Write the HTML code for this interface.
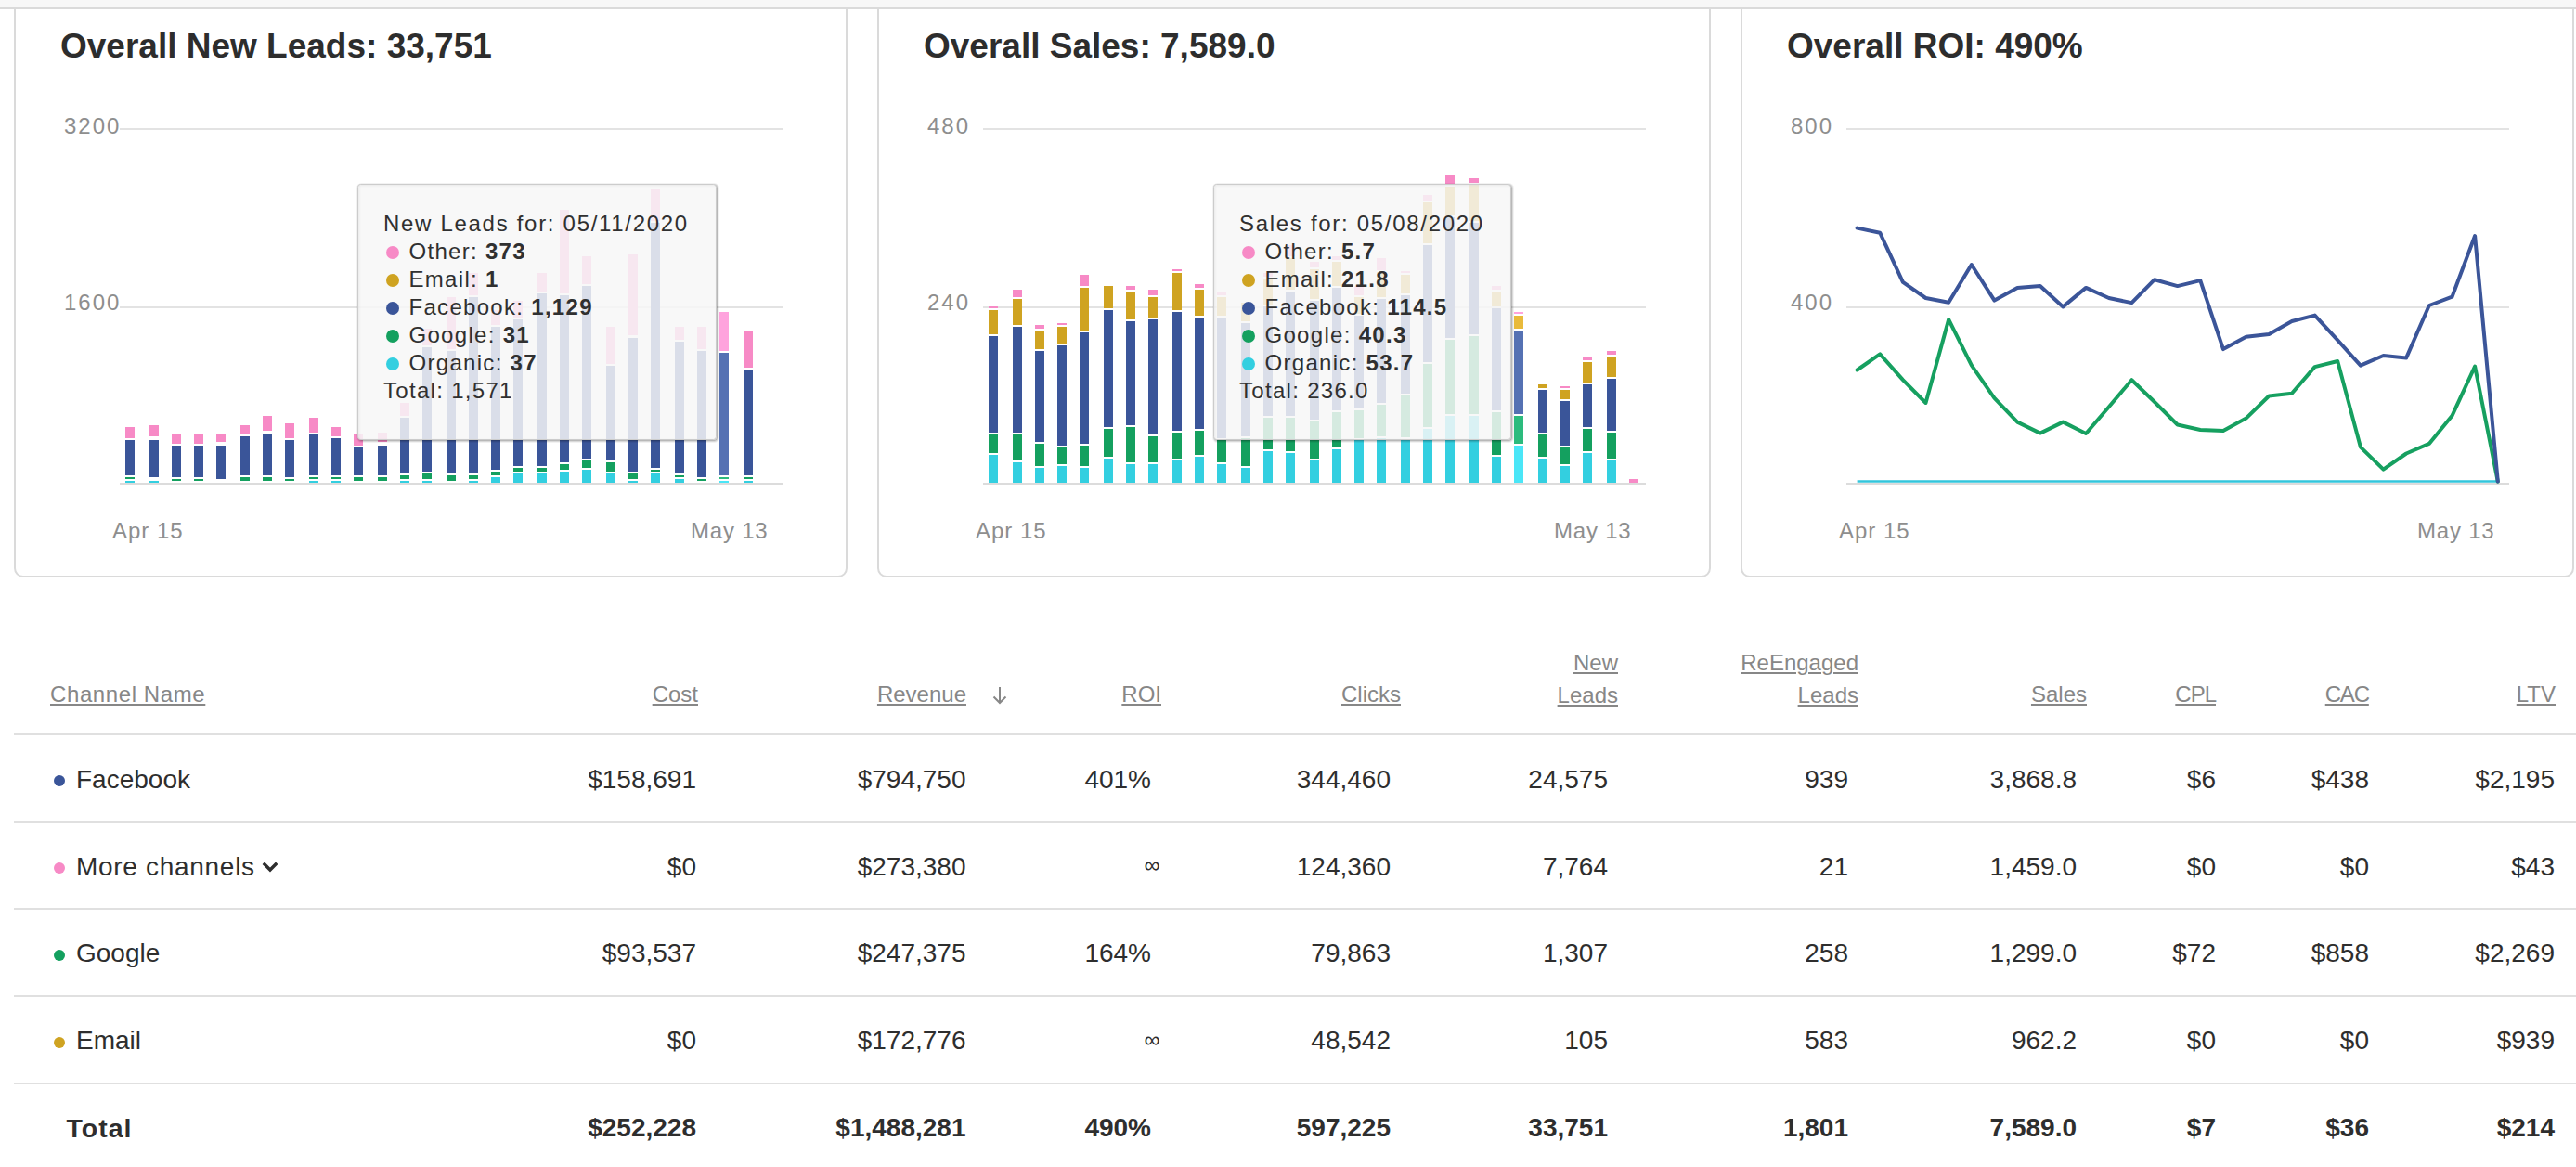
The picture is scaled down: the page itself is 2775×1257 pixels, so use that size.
<!DOCTYPE html>
<html><head><meta charset="utf-8"><style>
html,body{margin:0;padding:0;}
body{width:2775px;height:1257px;overflow:hidden;background:#fff;position:relative;font-family:"Liberation Sans", sans-serif;}
.t{position:absolute;white-space:nowrap;}
.card{position:absolute;top:-20px;width:894px;height:638px;border:2px solid #dadada;border-radius:10px;background:#fff;}
.tip{position:absolute;background:rgba(247,247,247,0.85);border:1px solid #c9c9c9;border-radius:4px;box-shadow:2px 2px 3px rgba(0,0,0,0.28);}
.dot{position:absolute;border-radius:50%;}
svg{position:absolute;left:0;top:0;}
.h{text-decoration:underline;text-decoration-thickness:2px;text-underline-offset:2px;}
</style></head><body>

<div class="card" style="left:15px"></div>
<div class="card" style="left:945px"></div>
<div class="card" style="left:1875px"></div>
<div style="position:absolute;left:0;top:0;width:2775px;height:8px;background:#f7f7f7;border-bottom:2px solid #dadada"></div>
<div class="t" style="left:65.0px;top:31.1px;font-size:37px;line-height:37px;color:#2d2d2d;font-weight:bold;letter-spacing:0px;">Overall New Leads: 33,751</div>
<div class="t" style="left:995.0px;top:31.1px;font-size:37px;line-height:37px;color:#2d2d2d;font-weight:bold;letter-spacing:0px;">Overall Sales: 7,589.0</div>
<div class="t" style="left:1925.0px;top:31.1px;font-size:37px;line-height:37px;color:#2d2d2d;font-weight:bold;letter-spacing:0px;">Overall ROI: 490%</div>
<svg width="2775" height="1257" viewBox="0 0 2775 1257" shape-rendering="crispEdges">
<rect x="129" y="138" width="714" height="2" fill="#e3e3e3"/>
<rect x="129" y="330" width="714" height="2" fill="#e3e3e3"/>
<rect x="129" y="520" width="714" height="2" fill="#dcdcdc"/>
<rect x="1059" y="138" width="714" height="2" fill="#e3e3e3"/>
<rect x="1059" y="330" width="714" height="2" fill="#e3e3e3"/>
<rect x="1059" y="520" width="714" height="2" fill="#dcdcdc"/>
<rect x="1989" y="138" width="714" height="2" fill="#e3e3e3"/>
<rect x="1989" y="330" width="714" height="2" fill="#e3e3e3"/>
<rect x="1989" y="520" width="714" height="2" fill="#dcdcdc"/>
<rect x="135" y="460" width="10" height="12" fill="#f78ac6"/>
<rect x="135" y="474" width="10" height="38" fill="#3a5599"/>
<rect x="135" y="514" width="10" height="2" fill="#14a05f"/>
<rect x="135" y="518" width="10" height="2" fill="#33cfe0"/>
<rect x="161" y="458" width="10" height="12" fill="#f78ac6"/>
<rect x="161" y="474" width="10" height="40" fill="#3a5599"/>
<rect x="161" y="518" width="10" height="2" fill="#33cfe0"/>
<rect x="185" y="468" width="10" height="10" fill="#f78ac6"/>
<rect x="185" y="480" width="10" height="34" fill="#3a5599"/>
<rect x="185" y="516" width="10" height="2" fill="#14a05f"/>
<rect x="209" y="468" width="10" height="10" fill="#f78ac6"/>
<rect x="209" y="480" width="10" height="34" fill="#3a5599"/>
<rect x="209" y="516" width="10" height="2" fill="#14a05f"/>
<rect x="233" y="468" width="10" height="8" fill="#f78ac6"/>
<rect x="233" y="480" width="10" height="36" fill="#3a5599"/>
<rect x="259" y="458" width="10" height="10" fill="#f78ac6"/>
<rect x="259" y="470" width="10" height="42" fill="#3a5599"/>
<rect x="259" y="514" width="10" height="4" fill="#14a05f"/>
<rect x="283" y="448" width="10" height="16" fill="#f78ac6"/>
<rect x="283" y="468" width="10" height="44" fill="#3a5599"/>
<rect x="283" y="514" width="10" height="4" fill="#14a05f"/>
<rect x="307" y="456" width="10" height="16" fill="#f78ac6"/>
<rect x="307" y="474" width="10" height="40" fill="#3a5599"/>
<rect x="307" y="516" width="10" height="2" fill="#14a05f"/>
<rect x="333" y="450" width="10" height="16" fill="#f78ac6"/>
<rect x="333" y="468" width="10" height="44" fill="#3a5599"/>
<rect x="333" y="514" width="10" height="2" fill="#14a05f"/>
<rect x="333" y="518" width="10" height="2" fill="#33cfe0"/>
<rect x="357" y="460" width="10" height="10" fill="#f78ac6"/>
<rect x="357" y="472" width="10" height="40" fill="#3a5599"/>
<rect x="357" y="514" width="10" height="2" fill="#14a05f"/>
<rect x="357" y="518" width="10" height="2" fill="#33cfe0"/>
<rect x="381" y="468" width="10" height="12" fill="#f78ac6"/>
<rect x="381" y="482" width="10" height="30" fill="#3a5599"/>
<rect x="381" y="514" width="10" height="4" fill="#14a05f"/>
<rect x="407" y="466" width="10" height="10" fill="#f78ac6"/>
<rect x="407" y="480" width="10" height="32" fill="#3a5599"/>
<rect x="407" y="514" width="10" height="4" fill="#14a05f"/>
<rect x="431" y="434" width="10" height="14" fill="#f78ac6"/>
<rect x="431" y="450" width="10" height="60" fill="#3a5599"/>
<rect x="431" y="512" width="10" height="4" fill="#14a05f"/>
<rect x="431" y="518" width="10" height="2" fill="#33cfe0"/>
<rect x="455" y="354" width="10" height="18" fill="#f78ac6"/>
<rect x="455" y="374" width="10" height="134" fill="#3a5599"/>
<rect x="455" y="510" width="10" height="6" fill="#14a05f"/>
<rect x="455" y="518" width="10" height="2" fill="#33cfe0"/>
<rect x="481" y="320" width="10" height="56" fill="#f78ac6"/>
<rect x="481" y="378" width="10" height="132" fill="#3a5599"/>
<rect x="481" y="512" width="10" height="6" fill="#14a05f"/>
<rect x="505" y="294" width="10" height="24" fill="#f78ac6"/>
<rect x="505" y="320" width="10" height="190" fill="#3a5599"/>
<rect x="505" y="512" width="10" height="4" fill="#14a05f"/>
<rect x="505" y="518" width="10" height="2" fill="#33cfe0"/>
<rect x="529" y="334" width="10" height="16" fill="#f78ac6"/>
<rect x="529" y="352" width="10" height="154" fill="#3a5599"/>
<rect x="529" y="508" width="10" height="4" fill="#14a05f"/>
<rect x="529" y="514" width="10" height="6" fill="#33cfe0"/>
<rect x="553" y="324" width="10" height="18" fill="#f78ac6"/>
<rect x="553" y="344" width="10" height="158" fill="#3a5599"/>
<rect x="553" y="504" width="10" height="4" fill="#14a05f"/>
<rect x="553" y="510" width="10" height="10" fill="#33cfe0"/>
<rect x="579" y="294" width="10" height="20" fill="#f78ac6"/>
<rect x="579" y="316" width="10" height="186" fill="#3a5599"/>
<rect x="579" y="504" width="10" height="4" fill="#14a05f"/>
<rect x="579" y="510" width="10" height="10" fill="#33cfe0"/>
<rect x="603" y="226" width="10" height="90" fill="#f78ac6"/>
<rect x="603" y="318" width="10" height="180" fill="#3a5599"/>
<rect x="603" y="500" width="10" height="6" fill="#14a05f"/>
<rect x="603" y="508" width="10" height="12" fill="#33cfe0"/>
<rect x="627" y="276" width="10" height="30" fill="#f78ac6"/>
<rect x="627" y="308" width="10" height="186" fill="#3a5599"/>
<rect x="627" y="496" width="10" height="8" fill="#14a05f"/>
<rect x="627" y="506" width="10" height="14" fill="#33cfe0"/>
<rect x="653" y="352" width="10" height="40" fill="#f78ac6"/>
<rect x="653" y="394" width="10" height="102" fill="#3a5599"/>
<rect x="653" y="498" width="10" height="10" fill="#14a05f"/>
<rect x="653" y="510" width="10" height="10" fill="#33cfe0"/>
<rect x="677" y="274" width="10" height="87" fill="#f78ac6"/>
<rect x="677" y="364" width="10" height="144" fill="#3a5599"/>
<rect x="677" y="510" width="10" height="6" fill="#14a05f"/>
<rect x="677" y="518" width="10" height="2" fill="#33cfe0"/>
<rect x="701" y="204" width="10" height="34" fill="#f78ac6"/>
<rect x="701" y="240" width="10" height="264" fill="#3a5599"/>
<rect x="701" y="506" width="10" height="2" fill="#14a05f"/>
<rect x="701" y="510" width="10" height="10" fill="#33cfe0"/>
<rect x="727" y="352" width="10" height="14" fill="#f78ac6"/>
<rect x="727" y="368" width="10" height="142" fill="#3a5599"/>
<rect x="727" y="512" width="10" height="2" fill="#14a05f"/>
<rect x="727" y="516" width="10" height="4" fill="#33cfe0"/>
<rect x="751" y="352" width="10" height="24" fill="#f78ac6"/>
<rect x="751" y="378" width="10" height="136" fill="#3a5599"/>
<rect x="751" y="516" width="10" height="2" fill="#14a05f"/>
<rect x="775" y="336" width="10" height="42" fill="#ffa3dd"/>
<rect x="775" y="380" width="10" height="132" fill="#5571b3"/>
<rect x="775" y="514" width="10" height="2" fill="#2cbb7d"/>
<rect x="775" y="518" width="10" height="2" fill="#4ae6f7"/>
<rect x="801" y="356" width="10" height="40" fill="#f78ac6"/>
<rect x="801" y="398" width="10" height="114" fill="#3a5599"/>
<rect x="801" y="514" width="10" height="2" fill="#14a05f"/>
<rect x="801" y="518" width="10" height="2" fill="#33cfe0"/>
<rect x="1065" y="330" width="10" height="2" fill="#f78ac6"/>
<rect x="1065" y="334" width="10" height="26" fill="#cfa321"/>
<rect x="1065" y="362" width="10" height="104" fill="#3a5599"/>
<rect x="1065" y="468" width="10" height="20" fill="#14a05f"/>
<rect x="1065" y="490" width="10" height="30" fill="#33cfe0"/>
<rect x="1091" y="312" width="10" height="8" fill="#f78ac6"/>
<rect x="1091" y="322" width="10" height="28" fill="#cfa321"/>
<rect x="1091" y="352" width="10" height="114" fill="#3a5599"/>
<rect x="1091" y="468" width="10" height="28" fill="#14a05f"/>
<rect x="1091" y="498" width="10" height="22" fill="#33cfe0"/>
<rect x="1115" y="350" width="10" height="4" fill="#f78ac6"/>
<rect x="1115" y="356" width="10" height="20" fill="#cfa321"/>
<rect x="1115" y="378" width="10" height="98" fill="#3a5599"/>
<rect x="1115" y="478" width="10" height="24" fill="#14a05f"/>
<rect x="1115" y="504" width="10" height="16" fill="#33cfe0"/>
<rect x="1139" y="348" width="10" height="2" fill="#f78ac6"/>
<rect x="1139" y="352" width="10" height="18" fill="#cfa321"/>
<rect x="1139" y="372" width="10" height="108" fill="#3a5599"/>
<rect x="1139" y="482" width="10" height="18" fill="#14a05f"/>
<rect x="1139" y="502" width="10" height="18" fill="#33cfe0"/>
<rect x="1163" y="296" width="10" height="12" fill="#f78ac6"/>
<rect x="1163" y="310" width="10" height="46" fill="#cfa321"/>
<rect x="1163" y="358" width="10" height="120" fill="#3a5599"/>
<rect x="1163" y="480" width="10" height="22" fill="#14a05f"/>
<rect x="1163" y="504" width="10" height="16" fill="#33cfe0"/>
<rect x="1189" y="308" width="10" height="24" fill="#cfa321"/>
<rect x="1189" y="334" width="10" height="126" fill="#3a5599"/>
<rect x="1189" y="462" width="10" height="30" fill="#14a05f"/>
<rect x="1189" y="494" width="10" height="26" fill="#33cfe0"/>
<rect x="1213" y="308" width="10" height="4" fill="#f78ac6"/>
<rect x="1213" y="314" width="10" height="30" fill="#cfa321"/>
<rect x="1213" y="346" width="10" height="112" fill="#3a5599"/>
<rect x="1213" y="460" width="10" height="38" fill="#14a05f"/>
<rect x="1213" y="500" width="10" height="20" fill="#33cfe0"/>
<rect x="1237" y="312" width="10" height="6" fill="#f78ac6"/>
<rect x="1237" y="320" width="10" height="22" fill="#cfa321"/>
<rect x="1237" y="344" width="10" height="124" fill="#3a5599"/>
<rect x="1237" y="470" width="10" height="28" fill="#14a05f"/>
<rect x="1237" y="500" width="10" height="20" fill="#33cfe0"/>
<rect x="1263" y="290" width="10" height="2" fill="#f78ac6"/>
<rect x="1263" y="294" width="10" height="40" fill="#cfa321"/>
<rect x="1263" y="336" width="10" height="128" fill="#3a5599"/>
<rect x="1263" y="466" width="10" height="28" fill="#14a05f"/>
<rect x="1263" y="496" width="10" height="24" fill="#33cfe0"/>
<rect x="1287" y="306" width="10" height="4" fill="#f78ac6"/>
<rect x="1287" y="312" width="10" height="28" fill="#cfa321"/>
<rect x="1287" y="342" width="10" height="120" fill="#3a5599"/>
<rect x="1287" y="464" width="10" height="26" fill="#14a05f"/>
<rect x="1287" y="492" width="10" height="28" fill="#33cfe0"/>
<rect x="1311" y="314" width="10" height="4" fill="#f78ac6"/>
<rect x="1311" y="320" width="10" height="20" fill="#cfa321"/>
<rect x="1311" y="342" width="10" height="130" fill="#3a5599"/>
<rect x="1311" y="474" width="10" height="24" fill="#14a05f"/>
<rect x="1311" y="500" width="10" height="20" fill="#33cfe0"/>
<rect x="1337" y="326" width="10" height="20" fill="#cfa321"/>
<rect x="1337" y="348" width="10" height="122" fill="#3a5599"/>
<rect x="1337" y="472" width="10" height="30" fill="#14a05f"/>
<rect x="1337" y="504" width="10" height="16" fill="#33cfe0"/>
<rect x="1361" y="294" width="10" height="4" fill="#f78ac6"/>
<rect x="1361" y="300" width="10" height="28" fill="#cfa321"/>
<rect x="1361" y="330" width="10" height="118" fill="#3a5599"/>
<rect x="1361" y="450" width="10" height="34" fill="#14a05f"/>
<rect x="1361" y="486" width="10" height="34" fill="#33cfe0"/>
<rect x="1385" y="264" width="10" height="12" fill="#f78ac6"/>
<rect x="1385" y="278" width="10" height="34" fill="#cfa321"/>
<rect x="1385" y="314" width="10" height="134" fill="#3a5599"/>
<rect x="1385" y="450" width="10" height="36" fill="#14a05f"/>
<rect x="1385" y="488" width="10" height="32" fill="#33cfe0"/>
<rect x="1411" y="282" width="10" height="6" fill="#f78ac6"/>
<rect x="1411" y="290" width="10" height="32" fill="#cfa321"/>
<rect x="1411" y="324" width="10" height="128" fill="#3a5599"/>
<rect x="1411" y="454" width="10" height="40" fill="#14a05f"/>
<rect x="1411" y="496" width="10" height="24" fill="#33cfe0"/>
<rect x="1435" y="276" width="10" height="4" fill="#f78ac6"/>
<rect x="1435" y="282" width="10" height="26" fill="#cfa321"/>
<rect x="1435" y="310" width="10" height="132" fill="#3a5599"/>
<rect x="1435" y="444" width="10" height="38" fill="#14a05f"/>
<rect x="1435" y="484" width="10" height="36" fill="#33cfe0"/>
<rect x="1459" y="308" width="10" height="10" fill="#f78ac6"/>
<rect x="1459" y="320" width="10" height="18" fill="#cfa321"/>
<rect x="1459" y="340" width="10" height="100" fill="#3a5599"/>
<rect x="1459" y="442" width="10" height="30" fill="#14a05f"/>
<rect x="1459" y="474" width="10" height="46" fill="#33cfe0"/>
<rect x="1483" y="278" width="10" height="13" fill="#f78ac6"/>
<rect x="1483" y="293" width="10" height="27" fill="#cfa321"/>
<rect x="1483" y="322" width="10" height="112" fill="#3a5599"/>
<rect x="1483" y="436" width="10" height="34" fill="#14a05f"/>
<rect x="1483" y="472" width="10" height="48" fill="#33cfe0"/>
<rect x="1509" y="292" width="10" height="2" fill="#f78ac6"/>
<rect x="1509" y="296" width="10" height="20" fill="#cfa321"/>
<rect x="1509" y="318" width="10" height="106" fill="#3a5599"/>
<rect x="1509" y="426" width="10" height="45" fill="#14a05f"/>
<rect x="1509" y="473" width="10" height="47" fill="#33cfe0"/>
<rect x="1533" y="210" width="10" height="6" fill="#f78ac6"/>
<rect x="1533" y="218" width="10" height="44" fill="#cfa321"/>
<rect x="1533" y="264" width="10" height="126" fill="#3a5599"/>
<rect x="1533" y="392" width="10" height="68" fill="#14a05f"/>
<rect x="1533" y="462" width="10" height="58" fill="#33cfe0"/>
<rect x="1557" y="188" width="10" height="11" fill="#f78ac6"/>
<rect x="1557" y="201" width="10" height="31" fill="#cfa321"/>
<rect x="1557" y="234" width="10" height="130" fill="#3a5599"/>
<rect x="1557" y="366" width="10" height="80" fill="#14a05f"/>
<rect x="1557" y="448" width="10" height="72" fill="#33cfe0"/>
<rect x="1583" y="192" width="10" height="5" fill="#f78ac6"/>
<rect x="1583" y="199" width="10" height="39" fill="#cfa321"/>
<rect x="1583" y="240" width="10" height="120" fill="#3a5599"/>
<rect x="1583" y="362" width="10" height="84" fill="#14a05f"/>
<rect x="1583" y="448" width="10" height="72" fill="#33cfe0"/>
<rect x="1607" y="308" width="10" height="4" fill="#f78ac6"/>
<rect x="1607" y="314" width="10" height="16" fill="#cfa321"/>
<rect x="1607" y="332" width="10" height="110" fill="#3a5599"/>
<rect x="1607" y="444" width="10" height="46" fill="#14a05f"/>
<rect x="1607" y="492" width="10" height="28" fill="#33cfe0"/>
<rect x="1631" y="336" width="10" height="2" fill="#ffa3dd"/>
<rect x="1631" y="340" width="10" height="14" fill="#e9ba3b"/>
<rect x="1631" y="356" width="10" height="90" fill="#5571b3"/>
<rect x="1631" y="448" width="10" height="30" fill="#2cbb7d"/>
<rect x="1631" y="480" width="10" height="40" fill="#4ae6f7"/>
<rect x="1657" y="414" width="10" height="4" fill="#cfa321"/>
<rect x="1657" y="420" width="10" height="46" fill="#3a5599"/>
<rect x="1657" y="468" width="10" height="24" fill="#14a05f"/>
<rect x="1657" y="494" width="10" height="26" fill="#33cfe0"/>
<rect x="1681" y="416" width="10" height="2" fill="#f78ac6"/>
<rect x="1681" y="420" width="10" height="10" fill="#cfa321"/>
<rect x="1681" y="432" width="10" height="48" fill="#3a5599"/>
<rect x="1681" y="482" width="10" height="18" fill="#14a05f"/>
<rect x="1681" y="502" width="10" height="18" fill="#33cfe0"/>
<rect x="1705" y="384" width="10" height="4" fill="#f78ac6"/>
<rect x="1705" y="390" width="10" height="22" fill="#cfa321"/>
<rect x="1705" y="414" width="10" height="46" fill="#3a5599"/>
<rect x="1705" y="462" width="10" height="24" fill="#14a05f"/>
<rect x="1705" y="488" width="10" height="32" fill="#33cfe0"/>
<rect x="1731" y="378" width="10" height="4" fill="#f78ac6"/>
<rect x="1731" y="384" width="10" height="22" fill="#cfa321"/>
<rect x="1731" y="408" width="10" height="56" fill="#3a5599"/>
<rect x="1731" y="466" width="10" height="28" fill="#14a05f"/>
<rect x="1731" y="496" width="10" height="24" fill="#33cfe0"/>
<rect x="1755" y="516" width="10" height="4" fill="#f78ac6"/>
</svg>
<svg width="2775" height="1257" viewBox="0 0 2775 1257"><polyline points="2000.6,518.6 2690.8,518.6" fill="none" stroke="#33c6dc" stroke-width="2.5"/><polyline points="2000.6,398.5 2025.2,381.4 2049.9,409.2 2074.5,434.0 2099.2,344.1 2123.8,393.4 2148.5,428.9 2173.2,454.6 2197.8,466.6 2222.4,454.6 2247.1,467.0 2271.8,438.3 2296.4,409.2 2321.0,433.0 2345.7,457.5 2370.3,463.0 2395.0,464.0 2419.6,450.6 2444.3,426.5 2468.9,423.8 2493.6,395.1 2518.2,389.0 2542.9,481.6 2567.5,505.6 2592.2,488.5 2616.8,477.9 2641.5,447.8 2666.1,394.6 2690.8,518.6" fill="none" stroke="#16a060" stroke-width="4" stroke-linejoin="round" stroke-linecap="round"/><polyline points="2000.6,245.6 2025.2,250.7 2049.9,303.9 2074.5,321.0 2099.2,325.7 2123.8,285.0 2148.5,323.6 2173.2,309.9 2197.8,308.1 2222.4,330.4 2247.1,309.9 2271.8,321.0 2296.4,326.1 2321.0,301.2 2345.7,308.1 2370.3,302.1 2395.0,376.1 2419.6,362.7 2444.3,360.0 2468.9,346.0 2493.6,339.6 2518.2,366.4 2542.9,393.7 2567.5,383.0 2592.2,385.4 2616.8,329.0 2641.5,319.7 2666.1,254.0 2690.8,518.6" fill="none" stroke="#3b5599" stroke-width="4" stroke-linejoin="round" stroke-linecap="round"/></svg>
<div class="t" style="left:69.0px;top:123.7px;font-size:24px;line-height:24px;color:#8e8e8e;font-weight:normal;letter-spacing:2px;">3200</div>
<div class="t" style="left:69.0px;top:314.2px;font-size:24px;line-height:24px;color:#8e8e8e;font-weight:normal;letter-spacing:2px;">1600</div>
<div class="t" style="left:121.0px;top:559.7px;font-size:24px;line-height:24px;color:#8e8e8e;font-weight:normal;letter-spacing:1px;">Apr 15</div>
<div class="t" style="left:744.0px;top:559.7px;font-size:24px;line-height:24px;color:#8e8e8e;font-weight:normal;letter-spacing:0.8px;">May 13</div>
<div class="t" style="left:999.0px;top:123.7px;font-size:24px;line-height:24px;color:#8e8e8e;font-weight:normal;letter-spacing:2px;">480</div>
<div class="t" style="left:999.0px;top:314.2px;font-size:24px;line-height:24px;color:#8e8e8e;font-weight:normal;letter-spacing:2px;">240</div>
<div class="t" style="left:1051.0px;top:559.7px;font-size:24px;line-height:24px;color:#8e8e8e;font-weight:normal;letter-spacing:1px;">Apr 15</div>
<div class="t" style="left:1674.0px;top:559.7px;font-size:24px;line-height:24px;color:#8e8e8e;font-weight:normal;letter-spacing:0.8px;">May 13</div>
<div class="t" style="left:1929.0px;top:123.7px;font-size:24px;line-height:24px;color:#8e8e8e;font-weight:normal;letter-spacing:2px;">800</div>
<div class="t" style="left:1929.0px;top:314.2px;font-size:24px;line-height:24px;color:#8e8e8e;font-weight:normal;letter-spacing:2px;">400</div>
<div class="t" style="left:1981.0px;top:559.7px;font-size:24px;line-height:24px;color:#8e8e8e;font-weight:normal;letter-spacing:1px;">Apr 15</div>
<div class="t" style="left:2604.0px;top:559.7px;font-size:24px;line-height:24px;color:#8e8e8e;font-weight:normal;letter-spacing:0.8px;">May 13</div>
<svg width="2775" height="1257"><rect x="386.5" y="199.5" width="386.0" height="275.0" rx="3" fill="none" stroke="#000" stroke-opacity="0.05" stroke-width="5"/><rect x="386.5" y="199.5" width="386.0" height="275.0" rx="3" fill="none" stroke="#000" stroke-opacity="0.1" stroke-width="3"/><rect x="386.5" y="199.5" width="386.0" height="275.0" rx="3" fill="none" stroke="#000" stroke-opacity="0.15" stroke-width="1"/><rect x="385.5" y="198.5" width="386.0" height="275.0" rx="3" fill="rgb(247,247,247)" fill-opacity="0.85" stroke="#cccccc" stroke-width="1"/></svg>
<div class="t" style="left:413.0px;top:229.3px;font-size:24px;line-height:24px;color:#303030;font-weight:normal;letter-spacing:1.7px;">New Leads for: 05/11/2020</div>
<div class="dot" style="left:415.5px;top:265.1px;width:14px;height:14px;background:#f78ac6"></div>
<div class="t" style="left:440.5px;top:259.3px;font-size:24px;line-height:24px;color:#303030;font-weight:normal;letter-spacing:1.3px;">Other: <b>373</b></div>
<div class="dot" style="left:415.5px;top:295.1px;width:14px;height:14px;background:#cfa321"></div>
<div class="t" style="left:440.5px;top:289.3px;font-size:24px;line-height:24px;color:#303030;font-weight:normal;letter-spacing:1.3px;">Email: <b>1</b></div>
<div class="dot" style="left:415.5px;top:325.1px;width:14px;height:14px;background:#3a5599"></div>
<div class="t" style="left:440.5px;top:319.3px;font-size:24px;line-height:24px;color:#303030;font-weight:normal;letter-spacing:1.3px;">Facebook: <b>1,129</b></div>
<div class="dot" style="left:415.5px;top:355.1px;width:14px;height:14px;background:#14a05f"></div>
<div class="t" style="left:440.5px;top:349.3px;font-size:24px;line-height:24px;color:#303030;font-weight:normal;letter-spacing:1.3px;">Google: <b>31</b></div>
<div class="dot" style="left:415.5px;top:385.1px;width:14px;height:14px;background:#33cfe0"></div>
<div class="t" style="left:440.5px;top:379.3px;font-size:24px;line-height:24px;color:#303030;font-weight:normal;letter-spacing:1.3px;">Organic: <b>37</b></div>
<div class="t" style="left:413.0px;top:409.3px;font-size:24px;line-height:24px;color:#303030;font-weight:normal;letter-spacing:1.3px;">Total: 1,571</div>
<svg width="2775" height="1257"><rect x="1308.5" y="199.5" width="320.0" height="275.0" rx="3" fill="none" stroke="#000" stroke-opacity="0.05" stroke-width="5"/><rect x="1308.5" y="199.5" width="320.0" height="275.0" rx="3" fill="none" stroke="#000" stroke-opacity="0.1" stroke-width="3"/><rect x="1308.5" y="199.5" width="320.0" height="275.0" rx="3" fill="none" stroke="#000" stroke-opacity="0.15" stroke-width="1"/><rect x="1307.5" y="198.5" width="320.0" height="275.0" rx="3" fill="rgb(247,247,247)" fill-opacity="0.85" stroke="#cccccc" stroke-width="1"/></svg>
<div class="t" style="left:1335.0px;top:229.3px;font-size:24px;line-height:24px;color:#303030;font-weight:normal;letter-spacing:1.7px;">Sales for: 05/08/2020</div>
<div class="dot" style="left:1337.5px;top:265.1px;width:14px;height:14px;background:#f78ac6"></div>
<div class="t" style="left:1362.5px;top:259.3px;font-size:24px;line-height:24px;color:#303030;font-weight:normal;letter-spacing:1.3px;">Other: <b>5.7</b></div>
<div class="dot" style="left:1337.5px;top:295.1px;width:14px;height:14px;background:#cfa321"></div>
<div class="t" style="left:1362.5px;top:289.3px;font-size:24px;line-height:24px;color:#303030;font-weight:normal;letter-spacing:1.3px;">Email: <b>21.8</b></div>
<div class="dot" style="left:1337.5px;top:325.1px;width:14px;height:14px;background:#3a5599"></div>
<div class="t" style="left:1362.5px;top:319.3px;font-size:24px;line-height:24px;color:#303030;font-weight:normal;letter-spacing:1.3px;">Facebook: <b>114.5</b></div>
<div class="dot" style="left:1337.5px;top:355.1px;width:14px;height:14px;background:#14a05f"></div>
<div class="t" style="left:1362.5px;top:349.3px;font-size:24px;line-height:24px;color:#303030;font-weight:normal;letter-spacing:1.3px;">Google: <b>40.3</b></div>
<div class="dot" style="left:1337.5px;top:385.1px;width:14px;height:14px;background:#33cfe0"></div>
<div class="t" style="left:1362.5px;top:379.3px;font-size:24px;line-height:24px;color:#303030;font-weight:normal;letter-spacing:1.3px;">Organic: <b>53.7</b></div>
<div class="t" style="left:1335.0px;top:409.3px;font-size:24px;line-height:24px;color:#303030;font-weight:normal;letter-spacing:1.3px;">Total: 236.0</div>
<div class="t" style="left:54.0px;top:735.7px;font-size:24px;line-height:24px;color:#878787;font-weight:normal;letter-spacing:0.6px;"><span class="h">Channel Name</span></div>
<div class="t" style="right:2023.0px;top:735.7px;font-size:24px;line-height:24px;color:#878787;font-weight:normal;letter-spacing:0px;"><span class="h">Cost</span></div>
<div class="t" style="right:1734.0px;top:735.7px;font-size:24px;line-height:24px;color:#878787;font-weight:normal;letter-spacing:0px;"><span class="h">Revenue</span></div>
<svg width="2775" height="1257"><g fill="none" stroke="#888" stroke-width="2"><line x1="1077" y1="740" x2="1077" y2="757"/><polyline points="1070.5,750.5 1077,757 1083.5,750.5"/></g></svg>
<div class="t" style="right:1524.0px;top:735.7px;font-size:24px;line-height:24px;color:#878787;font-weight:normal;letter-spacing:0px;"><span class="h">ROI</span></div>
<div class="t" style="right:1266.0px;top:735.7px;font-size:24px;line-height:24px;color:#878787;font-weight:normal;letter-spacing:0px;"><span class="h">Clicks</span></div>
<div class="t" style="right:1032.0px;top:702.4px;font-size:24px;line-height:24px;color:#878787;font-weight:normal;letter-spacing:0px;"><span class="h">New</span></div>
<div class="t" style="right:1032.0px;top:736.7px;font-size:24px;line-height:24px;color:#878787;font-weight:normal;letter-spacing:0px;"><span class="h">Leads</span></div>
<div class="t" style="right:773.0px;top:702.4px;font-size:24px;line-height:24px;color:#878787;font-weight:normal;letter-spacing:0px;"><span class="h">ReEngaged</span></div>
<div class="t" style="right:773.0px;top:736.7px;font-size:24px;line-height:24px;color:#878787;font-weight:normal;letter-spacing:0px;"><span class="h">Leads</span></div>
<div class="t" style="right:527.0px;top:735.7px;font-size:24px;line-height:24px;color:#878787;font-weight:normal;letter-spacing:0px;"><span class="h">Sales</span></div>
<div class="t" style="right:387.0px;top:735.7px;font-size:24px;line-height:24px;color:#878787;font-weight:normal;letter-spacing:-1px;margin-right:1px;"><span class="h">CPL</span></div>
<div class="t" style="right:222.0px;top:735.7px;font-size:24px;line-height:24px;color:#878787;font-weight:normal;letter-spacing:-1.2px;margin-right:1.2px;"><span class="h">CAC</span></div>
<div class="t" style="right:22.0px;top:735.7px;font-size:24px;line-height:24px;color:#878787;font-weight:normal;letter-spacing:0px;"><span class="h">LTV</span></div>
<div style="position:absolute;left:15px;top:790px;width:2760px;height:2px;background:#e0e0e0"></div>
<div style="position:absolute;left:15px;top:884px;width:2760px;height:2px;background:#e0e0e0"></div>
<div style="position:absolute;left:15px;top:978px;width:2760px;height:2px;background:#e0e0e0"></div>
<div style="position:absolute;left:15px;top:1072px;width:2760px;height:2px;background:#e0e0e0"></div>
<div style="position:absolute;left:15px;top:1166px;width:2760px;height:2px;background:#e0e0e0"></div>
<div class="dot" style="left:57.5px;top:835.0px;width:12.4px;height:12.4px;background:#3a5599"></div>
<div class="t" style="left:82.0px;top:825.6px;font-size:28px;line-height:28px;color:#2e2e2e;font-weight:normal;letter-spacing:0px;">Facebook</div>
<div class="t" style="right:2025.0px;top:825.6px;font-size:28px;line-height:28px;color:#2e2e2e;font-weight:normal;letter-spacing:0px;">$158,691</div>
<div class="t" style="right:1734.5px;top:825.6px;font-size:28px;line-height:28px;color:#2e2e2e;font-weight:normal;letter-spacing:0px;">$794,750</div>
<div class="t" style="right:1535.0px;top:825.6px;font-size:28px;line-height:28px;color:#2e2e2e;font-weight:normal;letter-spacing:0px;">401%</div>
<div class="t" style="right:1277.0px;top:825.6px;font-size:28px;line-height:28px;color:#2e2e2e;font-weight:normal;letter-spacing:0px;">344,460</div>
<div class="t" style="right:1043.0px;top:825.6px;font-size:28px;line-height:28px;color:#2e2e2e;font-weight:normal;letter-spacing:0px;">24,575</div>
<div class="t" style="right:784.0px;top:825.6px;font-size:28px;line-height:28px;color:#2e2e2e;font-weight:normal;letter-spacing:0px;">939</div>
<div class="t" style="right:538.0px;top:825.6px;font-size:28px;line-height:28px;color:#2e2e2e;font-weight:normal;letter-spacing:0px;">3,868.8</div>
<div class="t" style="right:388.0px;top:825.6px;font-size:28px;line-height:28px;color:#2e2e2e;font-weight:normal;letter-spacing:0px;">$6</div>
<div class="t" style="right:223.0px;top:825.6px;font-size:28px;line-height:28px;color:#2e2e2e;font-weight:normal;letter-spacing:0px;">$438</div>
<div class="t" style="right:23.0px;top:825.6px;font-size:28px;line-height:28px;color:#2e2e2e;font-weight:normal;letter-spacing:0px;">$2,195</div>
<div class="dot" style="left:57.5px;top:928.9px;width:12.4px;height:12.4px;background:#f78ac6"></div>
<div class="t" style="left:82.0px;top:919.5px;font-size:28px;line-height:28px;color:#2e2e2e;font-weight:normal;letter-spacing:0.7px;">More channels</div>
<div class="t" style="right:2025.0px;top:919.5px;font-size:28px;line-height:28px;color:#2e2e2e;font-weight:normal;letter-spacing:0px;">$0</div>
<div class="t" style="right:1734.5px;top:919.5px;font-size:28px;line-height:28px;color:#2e2e2e;font-weight:normal;letter-spacing:0px;">$273,380</div>
<div class="t" style="right:1525.5px;top:920.4px;font-size:24px;line-height:24px;color:#2e2e2e;font-weight:normal;letter-spacing:0px;">&#8734;</div>
<div class="t" style="right:1277.0px;top:919.5px;font-size:28px;line-height:28px;color:#2e2e2e;font-weight:normal;letter-spacing:0px;">124,360</div>
<div class="t" style="right:1043.0px;top:919.5px;font-size:28px;line-height:28px;color:#2e2e2e;font-weight:normal;letter-spacing:0px;">7,764</div>
<div class="t" style="right:784.0px;top:919.5px;font-size:28px;line-height:28px;color:#2e2e2e;font-weight:normal;letter-spacing:0px;">21</div>
<div class="t" style="right:538.0px;top:919.5px;font-size:28px;line-height:28px;color:#2e2e2e;font-weight:normal;letter-spacing:0px;">1,459.0</div>
<div class="t" style="right:388.0px;top:919.5px;font-size:28px;line-height:28px;color:#2e2e2e;font-weight:normal;letter-spacing:0px;">$0</div>
<div class="t" style="right:223.0px;top:919.5px;font-size:28px;line-height:28px;color:#2e2e2e;font-weight:normal;letter-spacing:0px;">$0</div>
<div class="t" style="right:23.0px;top:919.5px;font-size:28px;line-height:28px;color:#2e2e2e;font-weight:normal;letter-spacing:0px;">$43</div>
<svg width="2775" height="1257"><polyline points="283.8,929.8 291,937 298.2,929.8" fill="none" stroke="#2e2e2e" stroke-width="3.4"/></svg>
<div class="dot" style="left:57.5px;top:1022.8px;width:12.4px;height:12.4px;background:#14a05f"></div>
<div class="t" style="left:82.0px;top:1013.4px;font-size:28px;line-height:28px;color:#2e2e2e;font-weight:normal;letter-spacing:0px;">Google</div>
<div class="t" style="right:2025.0px;top:1013.4px;font-size:28px;line-height:28px;color:#2e2e2e;font-weight:normal;letter-spacing:0px;">$93,537</div>
<div class="t" style="right:1734.5px;top:1013.4px;font-size:28px;line-height:28px;color:#2e2e2e;font-weight:normal;letter-spacing:0px;">$247,375</div>
<div class="t" style="right:1535.0px;top:1013.4px;font-size:28px;line-height:28px;color:#2e2e2e;font-weight:normal;letter-spacing:0px;">164%</div>
<div class="t" style="right:1277.0px;top:1013.4px;font-size:28px;line-height:28px;color:#2e2e2e;font-weight:normal;letter-spacing:0px;">79,863</div>
<div class="t" style="right:1043.0px;top:1013.4px;font-size:28px;line-height:28px;color:#2e2e2e;font-weight:normal;letter-spacing:0px;">1,307</div>
<div class="t" style="right:784.0px;top:1013.4px;font-size:28px;line-height:28px;color:#2e2e2e;font-weight:normal;letter-spacing:0px;">258</div>
<div class="t" style="right:538.0px;top:1013.4px;font-size:28px;line-height:28px;color:#2e2e2e;font-weight:normal;letter-spacing:0px;">1,299.0</div>
<div class="t" style="right:388.0px;top:1013.4px;font-size:28px;line-height:28px;color:#2e2e2e;font-weight:normal;letter-spacing:0px;">$72</div>
<div class="t" style="right:223.0px;top:1013.4px;font-size:28px;line-height:28px;color:#2e2e2e;font-weight:normal;letter-spacing:0px;">$858</div>
<div class="t" style="right:23.0px;top:1013.4px;font-size:28px;line-height:28px;color:#2e2e2e;font-weight:normal;letter-spacing:0px;">$2,269</div>
<div class="dot" style="left:57.5px;top:1116.7px;width:12.4px;height:12.4px;background:#cfa321"></div>
<div class="t" style="left:82.0px;top:1107.3px;font-size:28px;line-height:28px;color:#2e2e2e;font-weight:normal;letter-spacing:0px;">Email</div>
<div class="t" style="right:2025.0px;top:1107.3px;font-size:28px;line-height:28px;color:#2e2e2e;font-weight:normal;letter-spacing:0px;">$0</div>
<div class="t" style="right:1734.5px;top:1107.3px;font-size:28px;line-height:28px;color:#2e2e2e;font-weight:normal;letter-spacing:0px;">$172,776</div>
<div class="t" style="right:1525.5px;top:1108.2px;font-size:24px;line-height:24px;color:#2e2e2e;font-weight:normal;letter-spacing:0px;">&#8734;</div>
<div class="t" style="right:1277.0px;top:1107.3px;font-size:28px;line-height:28px;color:#2e2e2e;font-weight:normal;letter-spacing:0px;">48,542</div>
<div class="t" style="right:1043.0px;top:1107.3px;font-size:28px;line-height:28px;color:#2e2e2e;font-weight:normal;letter-spacing:0px;">105</div>
<div class="t" style="right:784.0px;top:1107.3px;font-size:28px;line-height:28px;color:#2e2e2e;font-weight:normal;letter-spacing:0px;">583</div>
<div class="t" style="right:538.0px;top:1107.3px;font-size:28px;line-height:28px;color:#2e2e2e;font-weight:normal;letter-spacing:0px;">962.2</div>
<div class="t" style="right:388.0px;top:1107.3px;font-size:28px;line-height:28px;color:#2e2e2e;font-weight:normal;letter-spacing:0px;">$0</div>
<div class="t" style="right:223.0px;top:1107.3px;font-size:28px;line-height:28px;color:#2e2e2e;font-weight:normal;letter-spacing:0px;">$0</div>
<div class="t" style="right:23.0px;top:1107.3px;font-size:28px;line-height:28px;color:#2e2e2e;font-weight:normal;letter-spacing:0px;">$939</div>
<div class="t" style="left:71.5px;top:1200.8px;font-size:28.5px;line-height:28.5px;color:#2e2e2e;font-weight:bold;letter-spacing:1px;">Total</div>
<div class="t" style="right:2025.0px;top:1201.2px;font-size:28px;line-height:28px;color:#2e2e2e;font-weight:bold;letter-spacing:0px;">$252,228</div>
<div class="t" style="right:1734.5px;top:1201.2px;font-size:28px;line-height:28px;color:#2e2e2e;font-weight:bold;letter-spacing:0px;">$1,488,281</div>
<div class="t" style="right:1535.0px;top:1201.2px;font-size:28px;line-height:28px;color:#2e2e2e;font-weight:bold;letter-spacing:0px;">490%</div>
<div class="t" style="right:1277.0px;top:1201.2px;font-size:28px;line-height:28px;color:#2e2e2e;font-weight:bold;letter-spacing:0px;">597,225</div>
<div class="t" style="right:1043.0px;top:1201.2px;font-size:28px;line-height:28px;color:#2e2e2e;font-weight:bold;letter-spacing:0px;">33,751</div>
<div class="t" style="right:784.0px;top:1201.2px;font-size:28px;line-height:28px;color:#2e2e2e;font-weight:bold;letter-spacing:0px;">1,801</div>
<div class="t" style="right:538.0px;top:1201.2px;font-size:28px;line-height:28px;color:#2e2e2e;font-weight:bold;letter-spacing:0px;">7,589.0</div>
<div class="t" style="right:388.0px;top:1201.2px;font-size:28px;line-height:28px;color:#2e2e2e;font-weight:bold;letter-spacing:0px;">$7</div>
<div class="t" style="right:223.0px;top:1201.2px;font-size:28px;line-height:28px;color:#2e2e2e;font-weight:bold;letter-spacing:0px;">$36</div>
<div class="t" style="right:23.0px;top:1201.2px;font-size:28px;line-height:28px;color:#2e2e2e;font-weight:bold;letter-spacing:0px;">$214</div>
</body></html>
